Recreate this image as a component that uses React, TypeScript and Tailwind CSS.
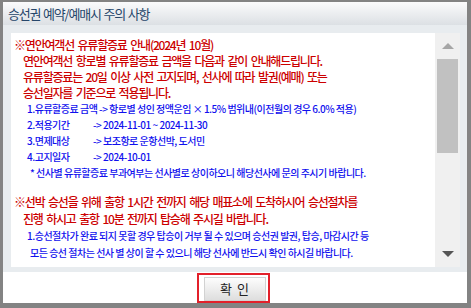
const KR = "font-['Noto_Sans_CJK_KR','Noto_Sans',sans-serif]";

function Red({ children, indent = false }: { children: React.ReactNode; indent?: boolean }) {
  return (
    <div
      className={`text-[12px] font-medium tracking-[-1.2px] [word-spacing:2px] text-[#cc0000] whitespace-nowrap ${indent ? 'pl-[9px]' : ''}`}
    >
      {children}
    </div>
  );
}

function Blue({ children, className = '' }: { children: React.ReactNode; className?: string }) {
  return (
    <div className={`text-[10px] font-medium tracking-[-0.5px] text-[#1010ee] whitespace-nowrap ${className}`}>
      {children}
    </div>
  );
}

function Item({ label, value }: { label: string; value: string }) {
  return (
    <Blue className="flex pl-[13px]">
      <span className="w-[66px]">{label}</span>
      <span>{value}</span>
    </Blue>
  );
}

function Scrollbar() {
  return (
    <div className="flex w-[25px] shrink-0 flex-col bg-[#f0f0f0]">
      <div className="flex h-[26px] items-center justify-center">
        <svg width="12" height="6" viewBox="0 0 12 6">
          <path d="M6 0L12 6H0z" fill="#a6a6a6" />
        </svg>
      </div>
      <div className="mx-auto h-[94px] w-[21px] bg-[#c1c1c1]" />
      <div className="flex-1" />
      <div className="flex h-[26px] items-center justify-center">
        <svg width="12" height="6" viewBox="0 0 12 6">
          <path d="M0 0H12L6 6z" fill="#555555" />
        </svg>
      </div>
    </div>
  );
}

export default function App() {
  return (
    <div
      className={`flex h-[308px] w-[471px] flex-col border-b-[5px] border-l-[3px] border-r-[4px] border-t-[2px] border-[#838383] bg-white ${KR}`}
    >
      {/* title bar */}
      <div className="flex h-[23px] shrink-0 items-center bg-gradient-to-b from-[#fbfbfc] to-[#dce0e4] pl-[5px]">
        <span className="text-[13px] tracking-[-1.2px] [word-spacing:1px] text-[#26466a]">승선권 예약/예매시 주의 사항</span>
      </div>

      {/* content */}
      <div className="flex h-[247px] shrink-0 bg-[#e8ecef] pb-[5px] pl-[8px] pr-[7px] pt-[8px]">
        <div className="flex flex-1 overflow-hidden bg-white">
          <div className="flex-1 overflow-hidden pl-[3px] pt-[4px]">
            <div className="leading-[16px]">
              <Red>※연안여객선 유류할증료 안내(2024년 10월)</Red>
              <Red indent>연안여객선 항로별 유류할증료 금액을 다음과 같이 안내해드립니다.</Red>
              <Red indent>유류할증료는 20일 이상 사전 고지되며, 선사에 따라 발권(예매) 또는</Red>
              <Red indent>승선일자를 기준으로 적용됩니다.</Red>
              <Blue className="pl-[13px]">1.유류할증료 금액 -&gt; 항로별 성인 정액운임 × 1.5% 범위내(이전월의 경우 6.0% 적용)</Blue>
              <Item label="2.적용기간" value="-> 2024-11-01 ~ 2024-11-30" />
              <Item label="3.면제대상" value="-> 보조항로 운항선박, 도서민" />
              <Item label="4.고지일자" value="-> 2024-10-01" />
              <Blue className="pl-[16px]">* 선사별 유류할증료 부과여부는 선사별로 상이하오니 해당선사에 문의 주시기 바랍니다.</Blue>
            </div>
            <div className="mt-[12px] leading-[17px]">
              <Red>※선박 승선을 위해 출항 1시간 전까지 해당 매표소에 도착하시어 승선절차를</Red>
              <Red indent>진행 하시고 출항 10분 전까지 탑승해 주시길 바랍니다.</Red>
              <Blue className="pl-[13px]">1.승선절차가 완료 되지 못할 경우 탑승이 거부 될 수 있으며 승선권 발권, 탑승, 마감시간 등</Blue>
              <Blue className="pl-[16px]">모든 승선 절차는 선사 별 상이 할 수 있으니 해당 선사에 반드시 확인 하시길 바랍니다.</Blue>
            </div>
          </div>
          <Scrollbar />
        </div>
      </div>

      {/* footer */}
      <div className="flex flex-1 items-end justify-center">
        <div className="ml-[-3px] border-2 border-[#e3202a] pl-[5px] pr-[2px] pt-[2px]">
          <button
            type="button"
            className="flex h-[24px] w-[62px] items-center justify-center border border-[#d2d2d2] bg-gradient-to-b from-[#fdfdfd] to-[#dedede] text-[13px] tracking-[1px] text-[#222]"
          >
            확&nbsp;인
          </button>
        </div>
      </div>
    </div>
  );
}
